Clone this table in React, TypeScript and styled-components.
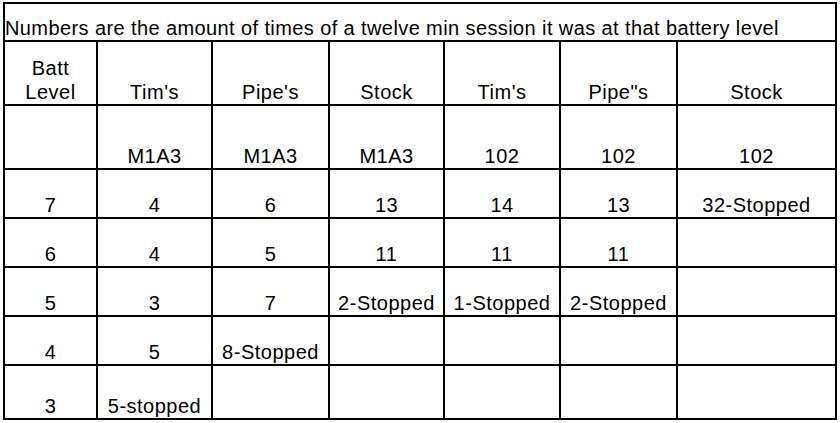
import React from "react";
import styled, { createGlobalStyle } from "styled-components";

const GlobalStyle = createGlobalStyle`
  html, body {
    margin: 0;
    padding: 0;
    background: #ffffff;
  }
`;

const Sheet = styled.div`
  display: grid;
  grid-template-columns: 91px 113px 115px 113px 114px 115px 157px;
  grid-template-rows: 36px 62px 62px 47px 47px 47px 47px 52px;
  gap: 2px;
  padding: 2px;
  background: #000000;
  width: fit-content;
  margin: 2px 0 0 3px;
`;

const Cell = styled.div<{ $align?: "left" | "center" }>`
  background: #ffffff;
  display: flex;
  align-items: flex-end;
  justify-content: ${(p) => (p.$align === "left" ? "flex-start" : "center")};
  text-align: ${(p) => (p.$align === "left" ? "left" : "center")};
  font-family: "Liberation Sans", Arial, sans-serif;
  font-size: 20px;
  letter-spacing: 0.5px;
  line-height: 24px;
  color: #000000;
  white-space: pre-line;
  overflow: visible;
`;

const TitleCell = styled(Cell)`
  grid-column: 1 / -1;
  letter-spacing: 0.4px;
`;

const header = ["Batt\nLevel", "Tim's", "Pipe's", "Stock", "Tim's", 'Pipe"s', "Stock"];

const rows: string[][] = [
  ["", "M1A3", "M1A3", "M1A3", "102", "102", "102"],
  ["7", "4", "6", "13", "14", "13", "32-Stopped"],
  ["6", "4", "5", "11", "11", "11", ""],
  ["5", "3", "7", "2-Stopped", "1-Stopped", "2-Stopped", ""],
  ["4", "5", "8-Stopped", "", "", "", ""],
  ["3", "5-stopped", "", "", "", "", ""],
];

export default function App() {
  return (
    <>
      <GlobalStyle />
      <Sheet>
        <TitleCell $align="left">
          Numbers are the amount of times of a twelve min session it was at that battery level
        </TitleCell>
        {header.map((h, i) => (
          <Cell key={`h${i}`}>{h}</Cell>
        ))}
        {rows.map((r, ri) =>
          r.map((c, ci) => <Cell key={`r${ri}c${ci}`}>{c}</Cell>)
        )}
      </Sheet>
    </>
  );
}
